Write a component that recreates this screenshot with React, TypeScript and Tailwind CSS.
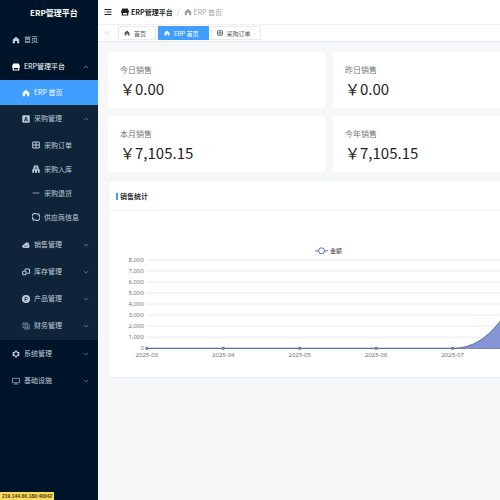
import type { ReactNode } from "react";

type IconProps = { className?: string };

function Icon({ className = "size-2", children }: IconProps & { children: ReactNode }) {
  return (
    <svg viewBox="0 0 16 16" className={`${className} shrink-0`} fill="currentColor" aria-hidden="true">
      {children}
    </svg>
  );
}

const HomeIcon = (p: IconProps) => (
  <Icon {...p}>
    <path d="M8 1.5 1.5 7v7.5H6V10h4v4.500h4.500V7z" />
  </Icon>
);

const ShopIcon = (p: IconProps) => (
  <Icon {...p}>
    <path d="M2.500 1h11L16 7a2 2 0 0 1-1.500 2.500V15h-13V9.500A2 2 0 0 1 0 7zM4 10v3h8v-3z" fillRule="evenodd" />
  </Icon>
);

const LetterBoxIcon = (p: IconProps) => (
  <Icon {...p}>
    <rect x="0.500" y="0.500" width="15" height="15" rx="2.500" />
    <path d="M4.500 13 8 3.500 11.500 13M5.700 10h4.600" fill="none" stroke="#10233a" strokeWidth="1.700" />
  </Icon>
);

const GridIcon = (p: IconProps) => (
  <Icon {...p}>
    <path d="M1.500 2h13v12h-13zM1.500 8h13M8 2v12" fill="none" stroke="currentColor" strokeWidth="2" />
  </Icon>
);

const WarehouseIcon = (p: IconProps) => (
  <Icon {...p}>
    <path d="M4 1h8l1.500 6 2 3v5.500H12v-4.500h-2v4.500H6v-4.500H4v4.500H.5V10l2-3zM6 3.500v1.300h4V3.500zM5 7v1.300h6V7z" fillRule="evenodd" />
  </Icon>
);

const MinusIcon = (p: IconProps) => (
  <Icon {...p}>
    <path d="M1 7.300h14v1.400H1z" />
  </Icon>
);

const SupplierIcon = (p: IconProps) => (
  <Icon {...p}>
    <path d="M3 12A5.800 5.800 0 0 1 9 2h5.500M13 4A5.800 5.800 0 0 1 7 14H1.500M14 2v4.500M2 14V9.500" fill="none" stroke="currentColor" strokeWidth="2.200" />
  </Icon>
);

const CloudIcon = (p: IconProps) => (
  <Icon {...p}>
    <path d="M3.500 14A3.300 3.300 0 0 1 3 7.500C5 7 6 3 10 2.500c3 0 4.500 2.500 4 5A3.700 3.700 0 0 1 12.500 14z" />
    <path d="m4 10.500 4 .5 4-4" fill="none" stroke="#10233a" strokeWidth="1.200" />
  </Icon>
);

const BoxesIcon = (p: IconProps) => (
  <Icon {...p}>
    <path d="M6 5.500V2h9v8.500H9.500M1.500 6.500h6.500v7H1.500z" fill="none" stroke="currentColor" strokeWidth="2" />
  </Icon>
);

const ProductIcon = (p: IconProps) => (
  <Icon {...p}>
    <circle cx="8" cy="8" r="8" />
    <path d="M6 12.500V4.500h2.500a2.400 2.400 0 0 1 0 4.800H6" fill="none" stroke="#10233a" strokeWidth="1.500" />
  </Icon>
);

const FinanceIcon = (p: IconProps) => (
  <Icon {...p}>
    <path d="M2 2h9.500v9.500H2zM4 14h10.500V5M4.500 5H9M4.500 8H9" fill="none" stroke="currentColor" strokeWidth="1.100" />
  </Icon>
);

const GearIcon = (p: IconProps) => (
  <Icon {...p}>
    <path d="M6.500.8h3l.6 2 1.700 1 2-.5 1.500 2.600L13.900 8l1.400 2.100-1.500 2.600-2-.5-1.700 1-.6 2h-3l-.6-2-1.700-1-2 .5L.7 10.100 2.100 8 .7 5.900l1.500-2.600 2 .5 1.700-1zM8 4.600a3.400 3.400 0 1 0 0 6.800 3.400 3.400 0 0 0 0-6.800z" fillRule="evenodd" />
  </Icon>
);

const MonitorIcon = (p: IconProps) => (
  <Icon {...p}>
    <path d="M1 2.500h14v9H1zM8 11.500v2.500M4.500 14.300h7" fill="none" stroke="currentColor" strokeWidth="1.300" />
  </Icon>
);

const MenuIcon = (p: IconProps) => (
  <Icon {...p}>
    <path d="M1 2h14v2.200H1zM5 6.900h10v2.200H5zM1 11.800h14V14H1zM1 6.500v3L3.500 8z" />
  </Icon>
);

const DoubleLeftIcon = (p: IconProps) => (
  <Icon {...p}>
    <path d="M8 2 2 8l6 6M14 2 8 8l6 6" fill="none" stroke="currentColor" strokeWidth="1.200" />
  </Icon>
);

function Chevron({ open }: { open?: boolean }) {
  return (
    <Icon className="ml-auto size-[6px] opacity-75">
      <path d={open ? "M2 11 8 5l6 6" : "M2 5l6 6 6-6"} fill="none" stroke="currentColor" strokeWidth="1.500" />
    </Icon>
  );
}

type MenuItem = {
  label: string;
  icon: (p: IconProps) => ReactNode;
  active?: boolean;
  closed?: boolean;
  children?: MenuItem[];
};

const menu: MenuItem[] = [
  { label: "首页", icon: HomeIcon },
  {
    label: "ERP管理平台",
    icon: ShopIcon,
    children: [
      { label: "ERP 首页", icon: HomeIcon, active: true },
      {
        label: "采购管理",
        icon: LetterBoxIcon,
        children: [
          { label: "采购订单", icon: GridIcon },
          { label: "采购入库", icon: WarehouseIcon },
          { label: "采购退货", icon: MinusIcon },
          { label: "供应商信息", icon: SupplierIcon },
        ],
      },
      { label: "销售管理", icon: CloudIcon, closed: true },
      { label: "库存管理", icon: BoxesIcon, closed: true },
      { label: "产品管理", icon: ProductIcon, closed: true },
      { label: "财务管理", icon: FinanceIcon, closed: true },
    ],
  },
  { label: "系统管理", icon: GearIcon, closed: true },
  { label: "基础设施", icon: MonitorIcon, closed: true },
];

// one entry per nesting level
const indents = ["pl-3", "pl-[22px]", "pl-8"];
const linkHeights = ["h-[27px]", "h-[25px]", "h-6"];
const listStyles = ["", "bg-[#0f2438] pb-px", "pt-px pb-0.5"];

function MenuList({ items, level = 0 }: { items: MenuItem[]; level?: number }) {
  return (
    <ul className={listStyles[level]}>
      {items.map((item) => {
        const row = `flex w-full items-center gap-1 pr-[9px] text-left ${indents[level]}`;
        if (item.children || item.closed) {
          const tone = item.children && level === 0 ? "text-white" : "text-[#bfcbd9]";
          return (
            <li key={item.label}>
              <button type="button" aria-expanded={!!item.children} className={`${row} h-[27px] ${tone}`}>
                <item.icon />
                <span>{item.label}</span>
                <Chevron open={!!item.children} />
              </button>
              {item.children && <MenuList items={item.children} level={level + 1} />}
            </li>
          );
        }
        return (
          <li key={item.label}>
            <a
              href="#"
              className={`${row} ${linkHeights[level]} ${item.active ? "bg-[#409eff] text-white" : "text-[#bfcbd9]"}`}
            >
              <item.icon />
              <span>{item.label}</span>
            </a>
          </li>
        );
      })}
    </ul>
  );
}

function Sidebar() {
  return (
    <aside className="w-[98px] shrink-0 bg-[#001529] text-[7px]">
      <h1 className="flex h-[26px] items-center pl-[30px] text-[8px] font-bold text-white">ERP管理平台</h1>
      <nav>
        <MenuList items={menu} />
      </nav>
    </aside>
  );
}

function Header() {
  return (
    <header className="flex h-[25px] items-center border-b border-[#f0f0f0] bg-white pl-1.5 text-[7px]">
      <button type="button" aria-label="折叠菜单" className="text-[#222]">
        <MenuIcon />
      </button>
      <nav aria-label="面包屑" className="ml-[9px] flex items-center">
        <a href="#" className="flex items-center gap-0.5 font-bold text-[#222]">
          <ShopIcon />
          ERP管理平台
        </a>
        <span className="mx-1 text-[#a8abb2]">/</span>
        <span className="flex items-center gap-0.5 text-[#a0a4aa]">
          <HomeIcon />
          ERP 首页
        </span>
      </nav>
    </header>
  );
}

const tabs = [
  { label: "首页", icon: HomeIcon, active: false },
  { label: "ERP 首页", icon: HomeIcon, active: true },
  { label: "采购订单", icon: GridIcon, active: false },
];

function TagsView() {
  return (
    <div className="flex h-[17px] items-center border-b border-[#e6e8eb] bg-white text-[6px]">
      <button type="button" aria-label="向左滚动" className="flex w-[18px] justify-center text-[#b8bcc4]">
        <DoubleLeftIcon className="size-[6px]" />
      </button>
      <div className="ml-0.5 flex gap-0.5">
        {tabs.map((tab) => (
          <a
            key={tab.label}
            href="#"
            className={`flex h-[14px] items-center gap-1 border pr-[9px] pl-[5px] ${
              tab.active ? "border-[#409eff] bg-[#409eff] text-white" : "border-[#e8eaee] bg-white text-[#555]"
            }`}
          >
            <tab.icon className="size-[6px]" />
            {tab.label}
          </a>
        ))}
      </div>
    </div>
  );
}

const stats = [
  { label: "今日销售", value: "￥0.00" },
  { label: "昨日销售", value: "￥0.00" },
  { label: "本月销售", value: "￥7,105.15" },
  { label: "今年销售", value: "￥7,105.15" },
];

const yTicks = ["8,000", "7,000", "6,000", "5,000", "4,000", "3,000", "2,000", "1,000", "0"];
const months = ["2025-03", "2025-04", "2025-05", "2025-06", "2025-07"];
const xOf = (i: number) => 38 + (i * 384) / 5;
const yOf = (i: number) => 49 + (i * 89) / 8;

function SalesChart() {
  const line = "M38 138H345.200C384 138 403 98 422 59";
  return (
    <svg
      viewBox="0 0 443 167"
      className="block h-auto w-full font-['Noto_Sans','Noto_Sans_CJK_SC',sans-serif]"
      role="img"
      aria-label="销售统计"
    >
      {yTicks.map((tick, i) => (
        <g key={tick}>
          <path d={`M38 ${yOf(i)}H422`} stroke={i === 8 ? "#6e7079" : "#e8ebf2"} strokeWidth="1" />
          <text x="35" y={yOf(i) + 2} textAnchor="end" fontSize="6" fill="#6e7079">
            {tick}
          </text>
        </g>
      ))}
      <path d={`${line}V138Z`} fill="#8695d8" />
      <path d={line} fill="none" stroke="#5470a6" strokeWidth="1" />
      {months.map((month, i) => (
        <g key={month}>
          <circle cx={xOf(i)} cy="138" r="1.200" fill="#9aa3b8" stroke="#5a6688" strokeWidth="1" />
          <text x={xOf(i)} y="147" textAnchor="middle" fontSize="6" fill="#6e7079">
            {month}
          </text>
        </g>
      ))}
      <path d="M207 40h13" stroke="#5470c6" strokeWidth="1" />
      <circle cx="213.500" cy="40" r="3" fill="#fff" stroke="#5470c6" strokeWidth="1" />
      <text x="222" y="42" fontSize="6" fill="#333">
        金额
      </text>
    </svg>
  );
}

function Dashboard() {
  return (
    <main className="pt-[10px] pr-[9px] pb-[10px] pl-[10px]">
      <div className="grid grid-cols-2 gap-x-[7px] gap-y-2">
        {stats.map((stat) => (
          <section key={stat.label} className="rounded-xs bg-white px-3 pt-3 pb-[9px]">
            <h2 className="text-[8px] leading-3 text-[#71747a]">{stat.label}</h2>
            <p className="mt-[3px] text-[15px] leading-5 text-[#1f1f1f]">{stat.value}</p>
          </section>
        ))}
      </div>
      <section className="mt-2 rounded-xs border border-[#eff1f4] bg-white">
        <h2 className="flex h-[30px] items-center gap-0.5 border-b border-[#eff1f4] pt-0.5 pl-[7px] text-[7px] font-bold text-[#303133]">
          <span className="h-[7px] w-0.5 bg-[#409eff]" />
          销售统计
        </h2>
        <SalesChart />
      </section>
    </main>
  );
}

export default function App() {
  return (
    <div className="relative flex min-h-screen overflow-hidden bg-[#f5f7f9] font-['Noto_Sans_CJK_SC',sans-serif]">
      <Sidebar />
      <div className="min-w-[462px] flex-1">
        <Header />
        <TagsView />
        <Dashboard />
      </div>
      <div className="absolute bottom-0 left-0 bg-[#fbdc5c] px-0.5 font-['Liberation_Sans',sans-serif] text-[5px] leading-2 font-bold text-[#4a3d10]">
        219.144.66.180:40042
      </div>
    </div>
  );
}
